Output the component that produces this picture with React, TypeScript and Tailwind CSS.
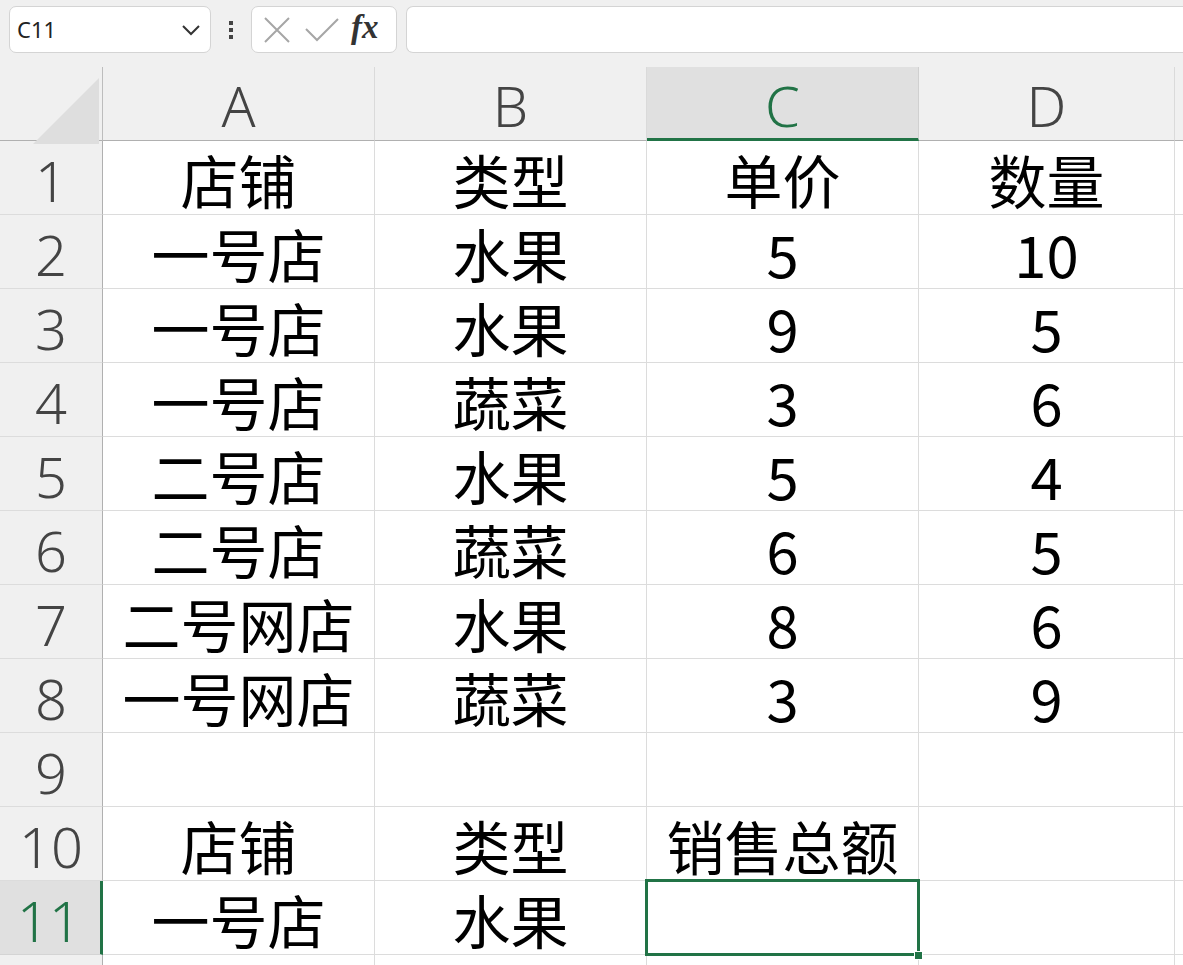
import React from "react";

const cols = ["A", "B", "C", "D"];
const rows: string[][] = [
  ["店铺", "类型", "单价", "数量"],
  ["一号店", "水果", "5", "10"],
  ["一号店", "水果", "9", "5"],
  ["一号店", "蔬菜", "3", "6"],
  ["二号店", "水果", "5", "4"],
  ["二号店", "蔬菜", "6", "5"],
  ["二号网店", "水果", "8", "6"],
  ["一号网店", "蔬菜", "3", "9"],
  ["", "", "", ""],
  ["店铺", "类型", "销售总额", ""],
  ["一号店", "水果", "", ""],
  ["", "", "", ""],
];

const cellFont = { fontFamily: '"Noto Sans CJK SC", "Noto Sans", sans-serif' };
const hdrFont = { fontFamily: '"Noto Sans", "Open Sans", sans-serif' };

export default function App() {
  return (
    <div className="w-[1183px] h-[965px] overflow-hidden bg-[#f0f0f0] relative">
      {/* toolbar */}
      <div className="h-[67px] flex items-start pt-[6px] pl-[9px] gap-0">
        <div className="w-[202px] h-[47px] bg-white border border-[#d4d4d4] rounded-[7px] flex items-center justify-between pl-[7px] pr-[9px]">
          <span className="text-[22px] text-[#222]" style={{ fontFamily: '"Noto Sans", sans-serif' }}>C11</span>
          <svg width="20" height="12" viewBox="0 0 20 12" fill="none" stroke="#333" strokeWidth="2">
            <path d="M2 2 L10 10 L18 2" />
          </svg>
        </div>
        <div className="w-[40px] h-[47px] flex flex-col items-center justify-center gap-[3px]">
          <div className="w-[4px] h-[4px] bg-[#444]" />
          <div className="w-[4px] h-[4px] bg-[#444]" />
          <div className="w-[4px] h-[4px] bg-[#444]" />
        </div>
        <div className="w-[146px] h-[47px] bg-white border border-[#d4d4d4] rounded-[7px] flex items-center pl-[11px] gap-[14px]">
          <svg width="28" height="28" viewBox="0 0 28 28" stroke="#a6a6a6" strokeWidth="2" fill="none">
            <path d="M2 2 L26 26 M26 2 L2 26" />
          </svg>
          <svg width="34" height="26" viewBox="0 0 34 26" stroke="#a6a6a6" strokeWidth="2" fill="none">
            <path d="M1 12 L12 23 L33 2" />
          </svg>
          <span className="text-[33px] italic font-bold text-[#333] leading-none -mt-[4px] -ml-[2px]" style={{ fontFamily: '"Liberation Serif", serif' }}>fx</span>
        </div>
        <div className="ml-[9px] flex-1 h-[47px] bg-white border border-[#d4d4d4] rounded-l-[7px] border-r-0" />
      </div>

      {/* grid */}
      <div className="grid grid-cols-[103px_272px_272px_272px_256px_1fr] bg-white">
        {/* header row */}
        <div className="h-[74px] bg-[#f0f0f0] border-r border-b border-r-[#bdbdbd] border-b-[#b0b0b0] relative">
          <svg className="absolute left-[33px] top-[11px]" width="66" height="66" viewBox="0 0 66 66">
            <polygon points="66,0 66,66 0,66" fill="#dedede" />
          </svg>
        </div>
        {cols.map((c) => (
          <div
            key={c}
            className={
              c === "C"
                ? "h-[74px] bg-[#e0e0e0] border-r border-r-[#d0d0d0] border-b-[3px] border-b-[#217346] flex items-center justify-center pt-[5px]"
                : "h-[74px] bg-[#f0f0f0] border-r border-r-[#dadada] border-b border-b-[#b0b0b0] flex items-center justify-center pt-[3px]"
            }
          >
            <span
              className={c === "C" ? "text-[56px] leading-none font-light text-[#217346]" : "text-[56px] leading-none font-light text-[#444]"}
              style={hdrFont}
            >
              {c}
            </span>
          </div>
        ))}
        <div className="h-[74px] bg-[#f0f0f0] border-b border-b-[#b0b0b0]" />

        {rows.map((r, i) => {
          const sel = i === 10;
          const last = i === 11;
          return (
            <React.Fragment key={i}>
              <div
                className={
                  sel
                    ? "h-[74px] bg-[#e0e0e0] border-r-[3px] border-r-[#217346] border-b border-b-[#d4d4d4] flex items-center justify-center pt-[4px] -ml-[2px]"
                    : "h-[74px] bg-[#f0f0f0] border-r border-r-[#b0b0b0] border-b border-b-[#dcdcdc] flex items-center justify-center pt-[4px]"
                }
              >
                <span
                  className={sel ? "text-[56px] leading-none font-light text-[#217346]" : "text-[56px] leading-none font-light text-[#444]"}
                  style={hdrFont}
                >
                  {last ? "" : i + 1}
                </span>
              </div>
              {r.map((v, j) => (
                <div
                  key={j}
                  className="h-[74px] border-r border-b border-[#dcdcdc] flex items-center justify-center pt-[2px] relative"
                >
                  <span className="text-[58px] leading-none text-black whitespace-nowrap" style={cellFont}>
                    {v}
                  </span>
                  {sel && j === 2 && (
                    <>
                      <div className="absolute z-10 left-[-2px] top-[-2px] right-[-2px] bottom-[-2px] border-[3px] border-[#217346]" />
                      <div className="absolute z-20 right-[-5px] bottom-[-6px] w-[9px] h-[9px] bg-[#217346] border border-white" />
                    </>
                  )}
                </div>
              ))}
              <div className="h-[74px] border-b border-[#dcdcdc]" />
            </React.Fragment>
          );
        })}
      </div>
    </div>
  );
}
